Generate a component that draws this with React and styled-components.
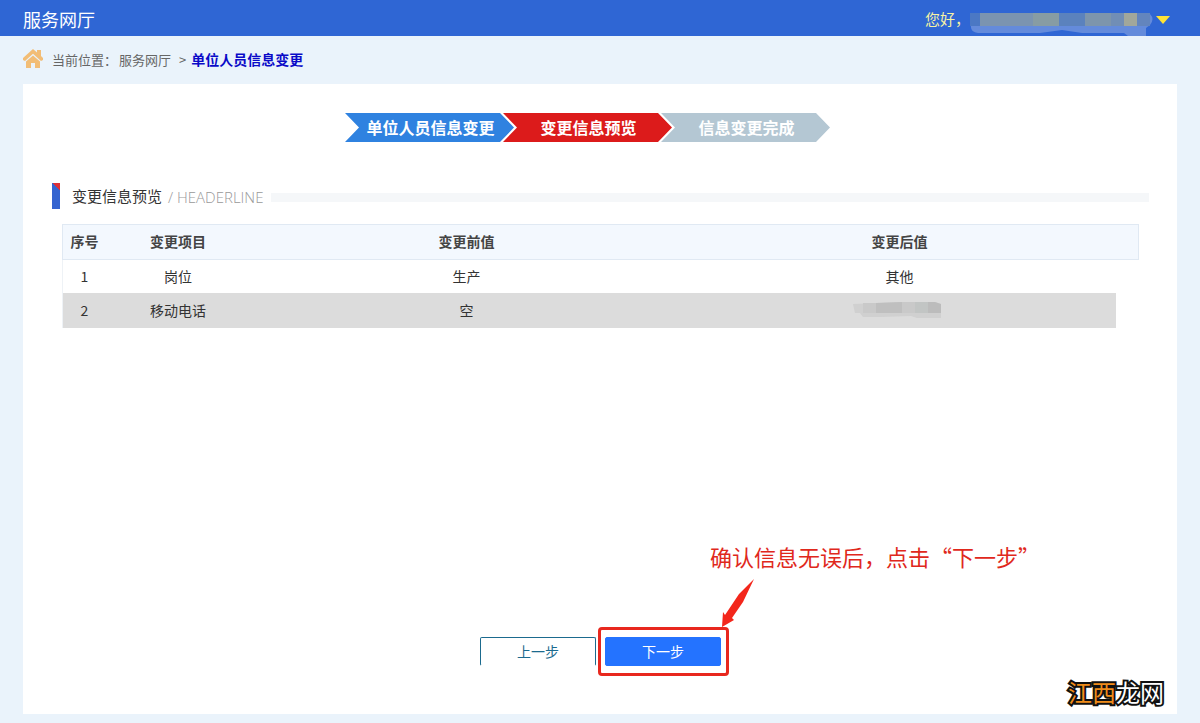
import React from 'react';
import styled, {createGlobalStyle} from 'styled-components';

const GlobalStyle = createGlobalStyle`
    * {
        box-sizing: border-box;
    }
    body {
        margin: 0;
        background: #eaf3fb;
        color: #333;
        font-family: 'Noto Sans CJK SC', sans-serif;
        font-size: 14px;
    }
`;

const Page = styled.div`
    position: relative;
    display: flex;
    flex-direction: column;
    min-height: 100vh;
`;

const TopBar = styled.header`
    display: flex;
    align-items: center;
    justify-content: space-between;
    height: 36px;
    padding: 2px 30px 0 23px;
    background: #2f66d4;
`;

const SiteName = styled.div`
    color: #fff;
    font-size: 18px;
    line-height: 24px;
`;

const UserMenu = styled.button`
    display: flex;
    align-items: center;
    padding: 0;
    border: 0;
    background: none;
    color: #f6f2a4;
    font-family: inherit;
    font-size: 15px;
    line-height: 24px;
    cursor: pointer;
`;

const Breadcrumb = styled.nav`
    display: flex;
    align-items: center;
    height: 48px;
    padding: 0 23px 2px;
    color: #666;
    font-size: 13px;
    svg {
        margin-right: 9px;
    }
    span {
        margin: 0 5px 0 8px;
    }
    a {
        margin-left: 2px;
        color: inherit;
        text-decoration: none;
    }
`;

const Current = styled.strong`
    color: #0a0ac8;
    font-size: 14px;
`;

const Panel = styled.main`
    display: flex;
    flex: 1;
    flex-direction: column;
    margin: 0 23px 9px;
    padding: 29px 28px 48px 29px;
    background: #fff;
`;

const Steps = styled.ol`
    display: flex;
    justify-content: center;
    margin: 0;
    padding: 0 26px 0 0;
    list-style: none;
`;

const Step = styled.li`
    width: 169px;
    height: 29px;
    padding-left: 2px;
    background: ${({color}) => color};
    clip-path: polygon(
        0 0,
        155px 0,
        100% 50%,
        155px 100%,
        0 100%,
        14px 50%
    );
    color: #fff;
    font-size: 16px;
    font-weight: bold;
    line-height: 28px;
    text-align: center;
    white-space: nowrap;
    & + & {
        margin-left: -11px;
    }
`;

const SectionHead = styled.div`
    display: flex;
    align-items: center;
    height: 26px;
    margin: 41px 0 15px;
    &::before {
        content: '';
        width: 8px;
        height: 26px;
        margin-right: 12px;
        background: linear-gradient(to top right, #3564d0 50%, #dd3038 50%) top /
            8px 7px no-repeat #3564d0;
    }
    &::after {
        content: '';
        flex: 1;
        height: 9px;
        margin: 3px 0 0 8px;
        background: #f5f7f9;
    }
`;

const SectionTitle = styled.h2`
    margin: 0 6px 0 0;
    font-size: 15px;
    font-weight: 400;
    line-height: 24px;
`;

const SectionSub = styled.span`
    margin-top: 2px;
    color: #999;
    font-family: 'Open Sans', sans-serif;
    font-size: 15px;
    font-weight: 300;
    line-height: 24px;
`;

const TableWrap = styled.div`
    padding: 0 10px;
`;

const Table = styled.table`
    width: 100%;
    border-spacing: 0;
    table-layout: fixed;
    text-align: center;
    th,
    td {
        padding: 0 0 2px;
    }
    th {
        height: 36px;
        border: solid #e0e9f3;
        border-width: 1px 0;
        background: #f3f8fe;
        color: #444;
    }
    th:first-child {
        border-left-width: 1px;
    }
    th:last-child {
        border-right-width: 1px;
    }
`;

const Row = styled.tr`
    td {
        height: ${({$active}) => ($active ? 35 : 33)}px;
        background: ${({$active}) => ($active ? '#dcdcdc' : '#fff')};
    }
    td:first-child {
        border-left: 1px solid #eef2f6;
    }
    svg {
        display: block;
        margin: 0 auto;
    }
`;

const Col = styled.col`
    width: ${({$width}) => $width};
`;

const Actions = styled.div`
    display: flex;
    justify-content: center;
    gap: 9px;
    margin-top: auto;
`;

const Button = styled.button`
    width: 116px;
    height: 29px;
    padding: 0;
    border: 1px solid ${({$primary}) => ($primary ? '#2473ff' : '#1b6a8e')};
    border-bottom-color: ${({$primary}) => ($primary ? '#2473ff' : '#fff')};
    border-radius: 2px;
    background: ${({$primary}) => ($primary ? '#2473ff' : '#fff')};
    color: ${({$primary}) => ($primary ? '#fff' : '#1b6a8e')};
    font-family: inherit;
    font-size: 14px;
    line-height: 27px;
    cursor: pointer;
`;

const Marked = styled.div`
    position: relative;
    &::after {
        content: '';
        position: absolute;
        inset: -10px -8px -10px -7px;
        border: 3px solid #e8281e;
        border-radius: 4px;
        pointer-events: none;
    }
`;

const Arrow = styled.svg`
    position: absolute;
    bottom: 38px;
    left: 116px;
`;

const Note = styled.p`
    position: absolute;
    bottom: 94px;
    left: 105px;
    margin: 0;
    color: #e0281c;
    font-size: 22px;
    line-height: 32px;
    white-space: nowrap;
`;

const Watermark = styled.div`
    position: absolute;
    right: 36px;
    bottom: 15px;
    color: #fff;
    font-size: 24px;
    font-weight: 400;
    line-height: 32px;
    -webkit-text-stroke: 4px #111;
    paint-order: stroke fill;
    span {
        color: #f08c1a;
    }
`;

const HomeIcon = () => (
    <svg width="20" height="20" viewBox="0 0 20 20" fill="#f2bd76">
        <path d="M10 0L14 3.4V1H18V7L20 9V11L18 12L10 4.8L2 12L0 11V9Z" />
        <path d="M10 6.4L17 12.6V19H12V14H8V19H3V12.6Z" />
    </svg>
);

const userBlocks = [
    [0, 10, '#4b78c4'],
    [10, 53, '#7b94b0'],
    [63, 26, '#879ca3'],
    [89, 26, '#5b82bd'],
    [115, 26, '#7d95ac'],
    [141, 13, '#718eb5'],
    [154, 13, '#a1a79b'],
    [167, 13, '#6385bd'],
];

const HiddenName = () => (
    <svg width="184" height="34" viewBox="0 -9 184 34">
        <path
            d="M3 3H180Q185 8 180 14L176 17V25H158L154 22H112L92 19L70 22H8Q0 21 1 14Z"
            fill="#648bdb"
        />
        {userBlocks.map(([x, width, fill]) => (
            <rect key={x} x={x} y="2" width={width} height="13" fill={fill} />
        ))}
    </svg>
);

const HiddenPhone = () => (
    <svg width="98" height="18" viewBox="0 0 98 18">
        <path d="M2 3L48 1H84L90 3V17H66L60 15L30 16H12L9 12H4Z" fill="#d0d0d0" />
        <path d="M12 2H25V12H12Z" fill="#c9c9c9" />
        <path d="M25 2L51 1V12H25Z" fill="#bfbfbf" />
        <path d="M51 1H64V12H51Z" fill="#c9c9c9" />
        <path d="M64 1H77V12H64Z" fill="#c2c5c4" />
        <path d="M77 1H84L90 3V12H77Z" fill="#bcbcbc" />
    </svg>
);

const steps = [
    {label: '单位人员信息变更', color: '#2f82e0'},
    {label: '变更信息预览', color: '#dc1b1b'},
    {label: '信息变更完成', color: '#b4c7d3'},
];

const changes = [
    {item: '岗位', before: '生产', after: '其他'},
    {item: '移动电话', before: '空', after: <HiddenPhone />},
];

export default function App() {
    return (
        <Page>
            <GlobalStyle />
            <TopBar>
                <SiteName>服务网厅</SiteName>
                <UserMenu type="button">
                    您好，
                    <HiddenName />
                    <svg width="16" height="10" viewBox="0 0 16 10">
                        <path d="M2 2H16L9 10Z" fill="#ffe335" />
                    </svg>
                </UserMenu>
            </TopBar>
            <Breadcrumb>
                <HomeIcon />
                当前位置：
                <a href="#hall">服务网厅</a>
                <span>&gt;</span>
                <Current>单位人员信息变更</Current>
            </Breadcrumb>
            <Panel>
                <Steps>
                    {steps.map(({label, color}) => (
                        <Step key={label} color={color}>
                            {label}
                        </Step>
                    ))}
                </Steps>
                <SectionHead>
                    <SectionTitle>变更信息预览</SectionTitle>
                    <SectionSub>/ HEADERLINE</SectionSub>
                </SectionHead>
                <TableWrap>
                    <Table>
                        <colgroup>
                            <Col $width="44px" />
                            <Col $width="144px" />
                            <Col $width="auto" />
                            <Col $width="auto" />
                            <Col $width="23px" />
                        </colgroup>
                        <thead>
                            <tr>
                                <th>序号</th>
                                <th>变更项目</th>
                                <th>变更前值</th>
                                <th>变更后值</th>
                                <th aria-hidden="true" />
                            </tr>
                        </thead>
                        <tbody>
                            {changes.map(({item, before, after}, index) => (
                                <Row key={item} $active={index === 1}>
                                    <td>{index + 1}</td>
                                    <td>{item}</td>
                                    <td>{before}</td>
                                    <td>{after}</td>
                                </Row>
                            ))}
                        </tbody>
                    </Table>
                </TableWrap>
                <Actions>
                    <Button type="button">上一步</Button>
                    <Marked>
                        <Button type="button" $primary>
                            下一步
                        </Button>
                        <Arrow width="34" height="50" viewBox="0 0 34 50">
                            <path
                                d="M33 1L18 16L4 37L2 34L1 49L13 42L11 40L22 24Z"
                                fill="#f3261b"
                            />
                        </Arrow>
                        <Note>确认信息无误后，点击“下一步”</Note>
                    </Marked>
                </Actions>
            </Panel>
            <Watermark>
                <span>江西</span>龙网
            </Watermark>
        </Page>
    );
}
